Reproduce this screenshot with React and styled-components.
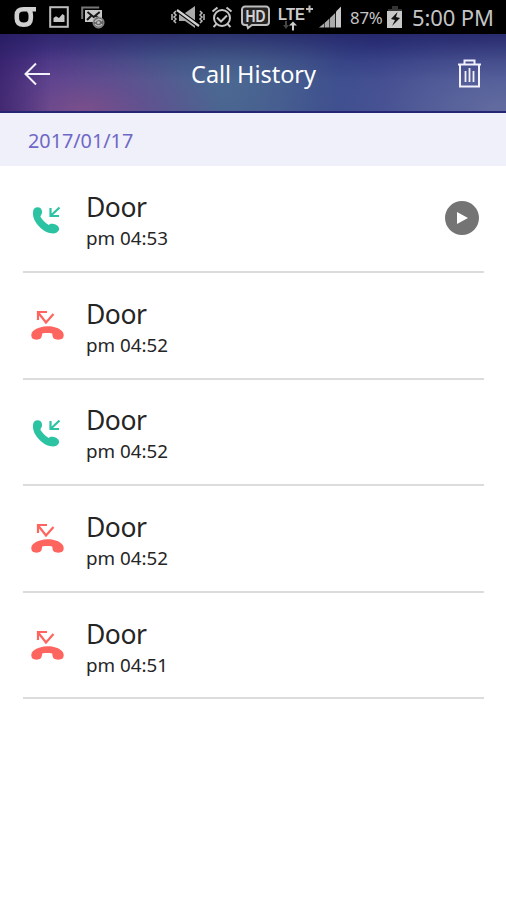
import React from "react";
import styled, { createGlobalStyle } from "styled-components";

const GlobalStyle = createGlobalStyle`
  * { box-sizing: border-box; }
  body { margin: 0; background: #fff; font-family: "Noto Sans", "Open Sans", sans-serif; }
  svg { display: block; flex: none; }
`;

const Screen = styled.main`
  width: 506px;
  height: 900px;
  background: #fff;
  overflow: hidden;
`;

const StatusBar = styled.div`
  height: 34px;
  background: #000;
  color: #c4c4c4;
  display: flex;
  align-items: center;
  justify-content: space-between;
  padding: 0 13px 0 14px;
`;

const StatusGroup = styled.div`
  display: flex;
  align-items: center;
  height: 34px;
`;

const StatusIcon = styled.svg`
  margin-left: ${(p) => p.$gap || 0}px;
`;

const Battery = styled.span`
  width: 34px;
  margin-left: 7px;
  padding-top: 2px;
  font-size: 16.8px;
  line-height: 24px;
  letter-spacing: -0.2px;
  white-space: nowrap;
`;

const Clock = styled.span`
  width: 81px;
  margin-left: 9px;
  font-size: 22px;
  line-height: 30px;
  letter-spacing: -0.1px;
  white-space: nowrap;
`;

const Header = styled.header`
  height: 79px;
  padding: 0 24px;
  display: grid;
  grid-template-columns: 28px 1fr 28px;
  align-items: center;
  color: #fff;
  border-bottom: 2px solid #262674;
  background:
    linear-gradient(180deg, rgba(28, 26, 92, 0.65), rgba(28, 26, 92, 0.15) 35%, rgba(28, 26, 92, 0) 60%),
    linear-gradient(90deg, rgba(38, 20, 85, 0.5), rgba(38, 20, 85, 0) 10%),
    radial-gradient(ellipse 135px 64px at 84px 76px, rgba(126, 80, 138, 0.9), rgba(112, 76, 142, 0.55) 45%, rgba(85, 70, 145, 0)),
    radial-gradient(ellipse 165px 120px at 220px 50px, rgba(77, 109, 148, 0.8), rgba(75, 105, 148, 0.5) 50%, rgba(70, 95, 145, 0)),
    radial-gradient(ellipse 190px 85px at 500px 74px, #626ca0, rgba(98, 108, 160, 0)),
    linear-gradient(90deg, #533690 0%, #50438f 20%, #465789 46%, #36418b 67%, #3b468d 100%);
`;

const Title = styled.h1`
  margin: 0;
  padding: 2px 0 0 1px;
  text-align: center;
  font-size: 23.5px;
  font-weight: 400;
  line-height: 32px;
  letter-spacing: -0.05px;
`;

const IconButton = styled.button`
  width: 28px;
  height: 32px;
  padding: ${(p) => (p.$end ? "1px 0 0" : "2px 0 0")};
  border: 0;
  background: none;
  color: #f1f0fb;
  display: flex;
  align-items: center;
  justify-content: ${(p) => (p.$end ? "flex-end" : "flex-start")};
`;

const DateBar = styled.div`
  height: 53px;
  padding: 2px 28px 0;
  display: flex;
  align-items: center;
  background: #eff0fa;
  color: #7068c5;
  font-size: 19.8px;
`;

const CallList = styled.ul`
  list-style: none;
  margin: 0;
  padding: 0.4px 22px 0 23px;
`;

const CallRow = styled.li`
  height: 106.6px;
  border-bottom: 2px solid #dcdcdc;
  display: grid;
  grid-template-columns: 62px 1fr 34px;
  align-items: center;
  padding: 0 5px 0 0;
`;

const CallIconSlot = styled.div`
  padding: ${(p) => (p.$answered ? "4px 0 0 8px" : "0 0 0 8px")};
`;

const CallText = styled.div`
  padding: 7px 0 0 1px;
`;

const Caller = styled.div`
  font-size: 26.5px;
  line-height: 32px;
  letter-spacing: -0.5px;
  color: #252525;
`;

const CallTime = styled.div`
  font-size: 18.8px;
  line-height: 30px;
  color: #252525;
`;

const PlayButton = styled.button`
  width: 34px;
  height: 34px;
  margin-bottom: 1px;
  padding: 0;
  border: 0;
  border-radius: 50%;
  background: #747474;
`;

const calls = [
  { kind: "answered", name: "Door", time: "pm 04:53", recorded: true },
  { kind: "missed", name: "Door", time: "pm 04:52" },
  { kind: "answered", name: "Door", time: "pm 04:52" },
  { kind: "missed", name: "Door", time: "pm 04:52" },
  { kind: "missed", name: "Door", time: "pm 04:51" },
];

const CarrierIcon = () => (
  <StatusIcon width="23" height="22" viewBox="0 0 23 22" fill="none" stroke="#d0d0d0" strokeWidth="4.6">
    <path d="M22 3.2H9.5C5 3.2 2.8 5.4 2.8 9.2v3c0 4.2 2.2 6.5 7 6.5s7-2.3 7-6.5v-3c0-2.6-.8-4.2-2.5-5.2" />
  </StatusIcon>
);

const PictureIcon = () => (
  <StatusIcon $gap={12} width="20" height="22" viewBox="0 0 20 22">
    <rect x="1.2" y="1.2" width="17.6" height="19.6" fill="none" stroke="#bdbdbd" strokeWidth="2" />
    <path d="M4.5 16v-4l2.5-1.7 3 1.7 3.5-4 2 1.5V16z" fill="#c6c6c6" />
  </StatusIcon>
);

const MessageIcon = () => (
  <StatusIcon $gap={12} width="24" height="23" viewBox="0 0 24 23" fill="none">
    <path d="M1.2 13V1.5h17" stroke="#777" strokeWidth="2" />
    <path d="M4 4h17v12H4z" fill="#c8c8c8" />
    <path d="M6.5 6l6.2 5 6-5M6 14l4-4m9 4-4-4" stroke="#171717" strokeWidth="2" />
    <circle cx="17.5" cy="16.5" r="5.5" fill="#666" stroke="#999" />
    <path d="M14 16a4 4 0 0 1 7-1m0 3a4 4 0 0 1-7 0" stroke="#bbb" strokeWidth="1.5" />
    <circle cx="17.5" cy="16.5" r="1.5" fill="#bbb" />
  </StatusIcon>
);

const MuteIcon = () => (
  <StatusIcon width="34" height="24" viewBox="0 0 34 24" fill="none">
    <path d="M8 8h6l10-7v22l-10-7H8z" fill="#aaa" />
    <path d="M6 5l22 16" stroke="#000" strokeWidth="4.5" />
    <path d="M6 5l22 16" stroke="#d2d2d2" strokeWidth="2.2" />
    <path d="M5 6l-2 2 2 2-2 2 2 2-2 2 2 2M1 9v6M29 6l2 2-2 2 2 2-2 2 2 2-2 2M33 9v6" stroke="#bdbdbd" strokeWidth="1.5" />
  </StatusIcon>
);

const AlarmIcon = () => (
  <StatusIcon $gap={6} width="22" height="24" viewBox="0 0 22 24" fill="none" stroke="#c5c5c5" strokeWidth="2">
    <circle cx="11" cy="13" r="8" />
    <path d="M6 12.5l4 4 6-6M1.5 6.5l5-4M20.5 6.5l-5-4M5.5 19l-3 3M16.5 19l3 3" />
  </StatusIcon>
);

const HdIcon = () => (
  <StatusIcon $gap={8} width="30" height="25" viewBox="0 0 30 25" fill="none">
    <path d="M4 1.5h21a3 3 0 0 1 3 3V17a3 3 0 0 1-3 3H11l-4 3-1-3H4a3 3 0 0 1-3-3V4.5a3 3 0 0 1 3-3z" fill="#242424" stroke="#bdbdbd" strokeWidth="2" />
    <text x="4.5" y="16.7" fontFamily="Liberation Sans" fontSize="16.5" fontWeight="700" fill="#d2d2d2" textLength="20" lengthAdjust="spacingAndGlyphs">HD</text>
  </StatusIcon>
);

const LteIcon = () => (
  <StatusIcon $gap={7} width="36" height="27" viewBox="0 0 36 27" fill="#ccc">
    <text x="0" y="16" fontFamily="Liberation Sans" fontSize="17" fontWeight="700" textLength="27" lengthAdjust="spacingAndGlyphs">LTE</text>
    <path d="M28 5h7M31.5 1.5v7" stroke="#bdbdbd" strokeWidth="2" />
    <path d="M15 17.5l4 4h-3v5h-2v-5h-3z" />
    <path d="M7 17h2v4h2l-3 4-3-4h2z" fill="#444" />
  </StatusIcon>
);

const SignalIcon = () => (
  <StatusIcon $gap={4} width="25" height="24" viewBox="0 0 25 24" fill="#aaa">
    <path d="M1 22.5l5-4v4zM6.6 18l4.8-4.5v9H6.6zM12 13l5.2-5v14.500H12z" />
    <path d="M18 6.5l5-5v21h-5z" fill="#c8c8c8" />
  </StatusIcon>
);

const BatteryIcon = () => (
  <StatusIcon $gap={3} width="16" height="24" viewBox="0 0 16 24">
    <path d="M5 1h6v3h4v3H1V4h4z" fill="#343434" />
    <path d="M0 6h15v17H0z" fill="#c8c8c8" />
    <path d="M10.5 7L4 14l4 1-3 6 8-8-4-1z" fill="#111" />
  </StatusIcon>
);

const BackIcon = () => (
  <svg width="27" height="24" viewBox="0 0 27 24" fill="none" stroke="currentColor" strokeWidth="2">
    <path d="M12 1.5L1.500 12 12 22.5M1.500 12H26" />
  </svg>
);

const TrashIcon = () => (
  <svg width="25" height="29" viewBox="0 0 25 29" fill="none" stroke="currentColor" strokeWidth="2">
    <path d="M1 5.5h23M7.5 5V1.5h10V5M3 6v21.500h19V6" />
    <path d="M8.5 12v11M12.5 9v14M16.5 12v11" strokeWidth="1.8" />
  </svg>
);

const AnsweredIcon = () => (
  <svg width="32" height="32" viewBox="0 0 32 32" fill="none">
    <path d="M3.3 3.5C5 2 8 2 9.6 3.3c1.8 1.6 2 5.1.4 7-.9 1.1-.6 1.6.6 3.1 2 2.7 4.7 5 7.2 6.600 1.2-1.6 3-1.5 5-.9 2.5.7 4.9 1.8 5.300 4.2.3 2.6-2.4 5-5.600 5.200C12.8 28.6 1.8 17.5 2 8.5c0-2 .2-3.9 1.3-5z" fill="#2bc3a2" />
    <path d="M28.5 2.5l-8.5 8M19.5 3v8h8.500" stroke="#2bc3a2" strokeWidth="2.2" />
  </svg>
);

const MissedIcon = () => (
  <svg width="34" height="30" viewBox="0 0 34 30" fill="none">
    <path d="M22.5 4L15 12.5 7.500 3M7 10V2h9" stroke="#ff655f" strokeWidth="2.2" />
    <path d="M1.500 28.5c-2-2.300-1.400-5.800.9-7.700 7-6 22.200-6 28.200 0 2.300 1.900 2.900 5.400.9 7.700-1.800 1.500-6.800 1.500-8.600 0-1.500-1.100-1.300-3.200-1.700-5-3.200-.6-6.800-.6-10 0-.4 1.800-.2 3.900-1.700 5-1.800 1.500-6.200 1.500-8 0z" fill="#ff655f" />
  </svg>
);

function CallEntry({ call }) {
  const answered = call.kind === "answered";
  return (
    <CallRow>
      <CallIconSlot $answered={answered}>{answered ? <AnsweredIcon /> : <MissedIcon />}</CallIconSlot>
      <CallText>
        <Caller>{call.name}</Caller>
        <CallTime>{call.time}</CallTime>
      </CallText>
      {call.recorded && (
        <PlayButton aria-label="Play">
          <svg width="34" height="34" viewBox="0 0 34 34"><path d="M12 11v12l11-6z" fill="#fff" /></svg>
        </PlayButton>
      )}
    </CallRow>
  );
}

export default function App() {
  return (
    <Screen>
      <GlobalStyle />
      <StatusBar>
        <StatusGroup><CarrierIcon /><PictureIcon /><MessageIcon /></StatusGroup>
        <StatusGroup>
          <MuteIcon /><AlarmIcon /><HdIcon /><LteIcon /><SignalIcon />
          <Battery>87%</Battery><BatteryIcon /><Clock>5:00 PM</Clock>
        </StatusGroup>
      </StatusBar>
      <Header>
        <IconButton aria-label="Back"><BackIcon /></IconButton>
        <Title>Call History</Title>
        <IconButton aria-label="Delete" $end><TrashIcon /></IconButton>
      </Header>
      <DateBar>2017/01/17</DateBar>
      <CallList>{calls.map((call, i) => <CallEntry key={i} call={call} />)}</CallList>
    </Screen>
  );
}
